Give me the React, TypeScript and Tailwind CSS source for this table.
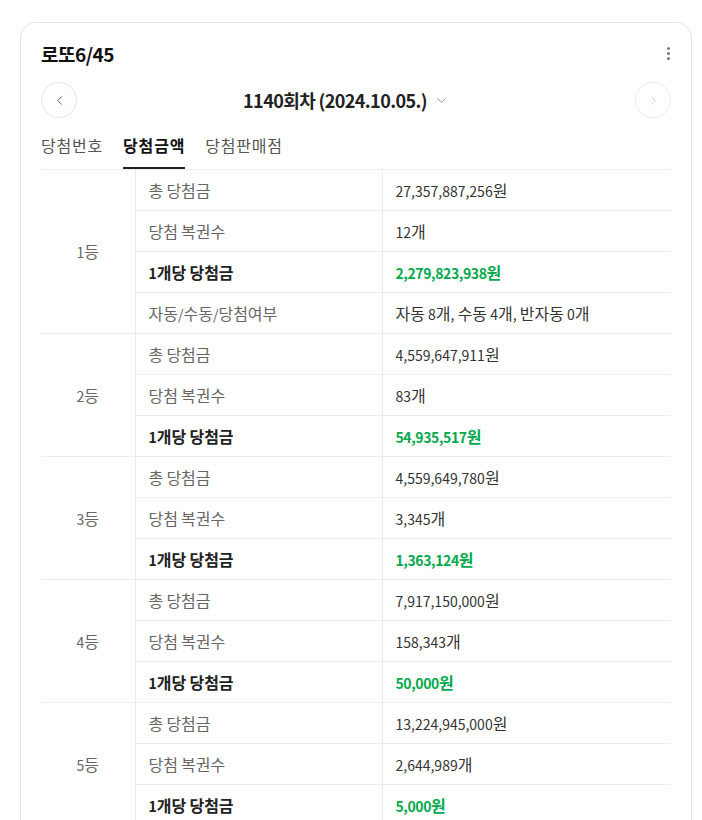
import { ChevronLeft, ChevronRight, ChevronDown } from 'lucide-react'

type Row = { label: string; value: string; strong?: boolean }
type Rank = { rank: string; rows: Row[] }

const ranks: Rank[] = [
  {
    rank: '1등',
    rows: [
      { label: '총 당첨금', value: '27,357,887,256원' },
      { label: '당첨 복권수', value: '12개' },
      { label: '1개당 당첨금', value: '2,279,823,938원', strong: true },
      { label: '자동/수동/당첨여부', value: '자동 8개, 수동 4개, 반자동 0개' },
    ],
  },
  {
    rank: '2등',
    rows: [
      { label: '총 당첨금', value: '4,559,647,911원' },
      { label: '당첨 복권수', value: '83개' },
      { label: '1개당 당첨금', value: '54,935,517원', strong: true },
    ],
  },
  {
    rank: '3등',
    rows: [
      { label: '총 당첨금', value: '4,559,649,780원' },
      { label: '당첨 복권수', value: '3,345개' },
      { label: '1개당 당첨금', value: '1,363,124원', strong: true },
    ],
  },
  {
    rank: '4등',
    rows: [
      { label: '총 당첨금', value: '7,917,150,000원' },
      { label: '당첨 복권수', value: '158,343개' },
      { label: '1개당 당첨금', value: '50,000원', strong: true },
    ],
  },
  {
    rank: '5등',
    rows: [
      { label: '총 당첨금', value: '13,224,945,000원' },
      { label: '당첨 복권수', value: '2,644,989개' },
      { label: '1개당 당첨금', value: '5,000원', strong: true },
    ],
  },
]

// hangul runs a bit larger, digits a bit smaller (closer to the original font's widths)
function Mixed({ text, tight }: { text: string; tight?: boolean }) {
  return (
    <>
      {text.split(/([가-힣]+)/).map((part, i) =>
        /[가-힣]/.test(part) ? (
          <span key={i} className="text-[16px]">
            {part}
          </span>
        ) : (
          <span key={i} className={tight ? 'text-[14px] tracking-[-0.4px]' : 'text-[14px]'}>
            {part}
          </span>
        )
      )}
    </>
  )
}

export default function App() {
  return (
    <div className="h-[820px] overflow-hidden bg-white pt-[22px] pl-5 pr-[10px] font-['Noto_Sans_CJK_KR','Noto_Sans',sans-serif] text-[#333]">
      <div className="rounded-t-2xl border border-b-0 border-[#e6e6e6] px-5 pt-[17px] pb-10">
        {/* header */}
        <div className="flex items-center justify-between h-[28px]">
          <h1 className="text-[19px] font-bold tracking-[-0.5px] text-[#111]">로또6/45</h1>
          <div className="flex flex-col gap-[2px] mr-[1px] -mt-[2px]">
            <span className="w-[3px] h-[3px] rounded-full bg-[#777]" />
            <span className="w-[3px] h-[3px] rounded-full bg-[#777]" />
            <span className="w-[3px] h-[3px] rounded-full bg-[#777]" />
          </div>
        </div>

        <div className="flex items-center justify-between mt-[14px]">
          <button className="w-9 h-9 rounded-full border border-[#e4e4e4] flex items-center justify-center text-[#555]">
            <ChevronLeft className="w-[15px] h-[15px]" strokeWidth={1.5} />
          </button>
          <div className="flex items-center gap-[7px] mr-[20px] text-[18px] leading-[26px] font-bold text-[#222] tracking-[-0.6px]">
            <span>1140회차 (2024.10.05.)</span>
            <ChevronDown className="w-[15px] h-[15px] text-[#888]" strokeWidth={1.5} />
          </div>
          <button className="w-9 h-9 rounded-full border border-[#ececec] flex items-center justify-center text-[#ccc]">
            <ChevronRight className="w-[15px] h-[15px]" strokeWidth={1.5} />
          </button>
        </div>

        {/* tabs */}
        <div className="flex gap-5 mt-[2px] text-[16px] leading-[22px] tracking-[0.8px]">
          {['당첨번호', '당첨금액', '당첨판매점'].map((t, i) => (
            <div
              key={t}
              className={
                i === 1
                  ? 'pt-[14px] pb-[11px] border-b-2 border-[#222] font-bold text-[#111]'
                  : 'pt-[14px] pb-[13px] text-[#555]'
              }
            >
              {t}
            </div>
          ))}
        </div>

        <table className="w-full border-collapse border-t border-[#ececec] leading-[22px]">
          <colgroup>
            <col className="w-[94px]" />
            <col className="w-[247px]" />
            <col />
          </colgroup>
          <tbody>
            {ranks.map((r) =>
              r.rows.map((row, j) => (
                <tr key={r.rank + j} className="h-[41px]">
                  {j === 0 && (
                    <td
                      rowSpan={r.rows.length}
                      className="text-center text-[#666] border-b border-r border-[#ececec] align-middle"
                    >
                      <Mixed text={r.rank} />
                    </td>
                  )}
                  <td
                    className={
                      'px-[13px] border-b border-r border-[#ececec] ' +
                      (row.strong ? 'font-bold text-[#222]' : 'text-[#666]')
                    }
                  >
                    <Mixed text={row.label} />
                  </td>
                  <td
                    className={
                      'px-[13px] border-b border-[#ececec] ' +
                      (row.strong ? 'font-bold text-[#03a94d]' : 'text-[#333]')
                    }
                  >
                    <Mixed text={row.value} tight={row.strong} />
                  </td>
                </tr>
              ))
            )}
          </tbody>
        </table>
      </div>
    </div>
  )
}
